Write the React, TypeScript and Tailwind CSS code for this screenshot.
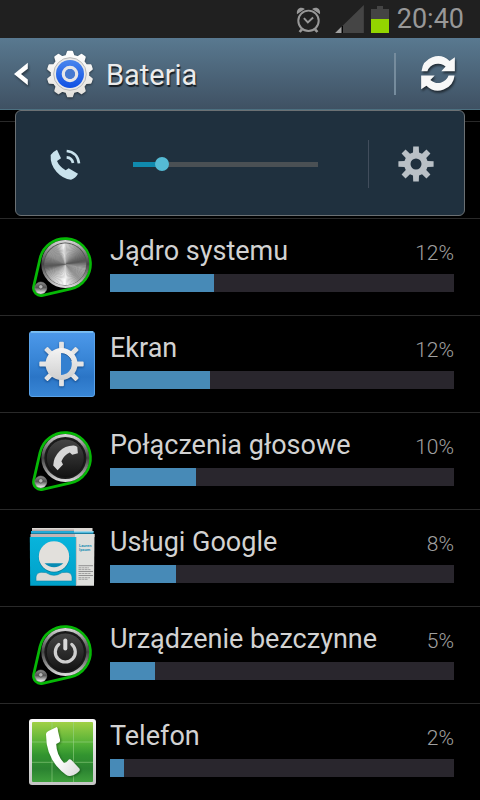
import React, { useId, useState } from "react";

function AlarmIcon() {
  return (
    <svg viewBox="46 18 76 80" className="h-[27px] w-[25px]" fill="none" stroke="#989898" strokeWidth="6" aria-hidden="true">
      <circle cx="84" cy="62" r="31" />
      <path d="M70 54L82 67L98 52" strokeWidth="6" />
      <path d="M64 88L57 96M104 88L111 96" strokeWidth="8" />
      <path d="M49 42C46 25 60 17 73 26ZM119 42C122 25 108 17 95 26Z" fill="#989898" stroke="none" />
    </svg>
  );
}

function SignalIcon() {
  return (
    <svg viewBox="167 14 85 83" className="h-7 w-[29px]" aria-hidden="true">
      <path d="M167 97L252 14V97Z" fill="#454545" />
      <path d="M167 97L187 77V97Z" fill="#a2a2a2" />
      <path d="M186 76H190V97H186Z" fill="#000" />
    </svg>
  );
}

function BatteryIcon() {
  return (
    <svg viewBox="0 0 18 27" className="h-[27px] w-[18px]" aria-hidden="true">
      <path d="M0 3H6V0H12V3H18V13H0Z" fill="#444" />
      <path d="M0 13H18V27H0Z" fill="#93d500" />
    </svg>
  );
}

function gearPath(cx: number, cy: number, teeth: number, root: number, tip: number, baseHalf: number, tipHalf: number) {
  const parts: string[] = [];
  for (let i = 0; i < teeth; i++) {
    const a = (i / teeth) * Math.PI * 2;
    const corners = [
      [-baseHalf, root],
      [-tipHalf, tip],
      [tipHalf, tip],
      [baseHalf, root],
    ];
    corners.forEach(([t, r], k) => {
      const x = cx + Math.sin(a) * r + Math.cos(a) * t;
      const y = cy - Math.cos(a) * r + Math.sin(a) * t;
      parts.push(`${i === 0 && k === 0 ? "M" : "L"}${x.toFixed(2)} ${y.toFixed(2)}`);
    });
  }
  return parts.join("") + "Z";
}

function SettingsIcon() {
  return (
    <svg viewBox="0 0 48 48" className="size-12 drop-shadow-[0_1px_1px_rgba(0,0,0,0.5)]" aria-hidden="true">
      <defs>
        <linearGradient id="set-blue" x2="0" y2="1">
          <stop offset="0" stopColor="#4a86ee" />
          <stop offset="1" stopColor="#0f50e4" />
        </linearGradient>
        <linearGradient id="set-white" x2="0" y2="1">
          <stop offset="0" stopColor="#fff" />
          <stop offset="1" stopColor="#e2e0dc" />
        </linearGradient>
      </defs>
      <path d={gearPath(24, 24, 10, 18, 22.3, 3.6, 2)} fill="url(#set-white)" stroke="url(#set-white)" strokeWidth="2" strokeLinejoin="round" />
      <circle cx="24" cy="24" r="16.3" fill="#e9e9e9" stroke="#b9b9b9" strokeWidth="1" />
      <circle cx="24" cy="24" r="14" fill="url(#set-blue)" />
      <circle cx="24" cy="24" r="6.6" fill="none" stroke="#e6e6e8" strokeWidth="3.4" />
      <circle cx="24" cy="24" r="5" fill="#477ad0" />
    </svg>
  );
}

function RefreshIcon() {
  const d = "M424 217A50 50 0 0 1 509 186L525 175V217H484L497 203A34 34 0 0 0 442 217Z";
  return (
    <svg viewBox="420 168 108 112" className="h-[37px] w-9 drop-shadow-[1px_2px_1px_rgba(0,0,0,0.55)]" fill="#f8f8f8" aria-hidden="true">
      <path d={d} />
      <path d={d} transform="rotate(180 474 223.5)" />
    </svg>
  );
}

function RingerIcon() {
  return (
    <svg viewBox="148 144 93 93" className="size-[31px]" fill="#c9e2ec" aria-hidden="true">
      <path d="M150 162Q158 151 169 146L181 172L169 180Q176 197 195 208L204 202L232 218Q225 231 211 236Q187 234 168 213Q148 191 150 162Z" />
      <path d="M198 150Q230 153 235 187M198 169Q214 170 217 186" fill="none" stroke="#c9e2ec" strokeWidth="8" />
    </svg>
  );
}

function GearIcon() {
  return (
    <svg viewBox="0 0 36 36" className="size-9" aria-hidden="true">
      <path
        fillRule="evenodd"
        d={gearPath(18, 18, 8, 11.5, 17.6, 3, 2.8) + "M12.5 18a5.5 5.5 0 1 0 11 0a5.5 5.5 0 1 0 -11 0Z"}
        fill="#b9c0c6"
      />
    </svg>
  );
}

const shine: [number, number][] = [
  [0, 205],
  [35, 150],
  [78, 85],
  [100, 165],
  [135, 150],
  [180, 250],
  [215, 200],
  [245, 150],
  [262, 85],
  [300, 150],
  [330, 160],
  [352, 240],
  [360, 225],
];

function shade(angle: number) {
  const i = Math.max(1, shine.findIndex(([a]) => a >= angle));
  const [a0, v0] = shine[i - 1];
  const [a1, v1] = shine[i];
  const v = Math.round(v0 + ((v1 - v0) * (angle - a0)) / (a1 - a0));
  return `rgb(${v},${v},${v})`;
}

function BrushedDisc({ cx, cy, r }: { cx: number; cy: number; r: number }) {
  const step = 4;
  return (
    <g>
      {Array.from({ length: 360 / step }, (_, i) => {
        const a = (i * step * Math.PI) / 180;
        const b = ((i * step + step + 1) * Math.PI) / 180;
        return (
          <path
            key={i}
            d={`M${cx} ${cy}L${cx + r * Math.sin(a)} ${cy - r * Math.cos(a)}L${cx + r * Math.sin(b)} ${cy - r * Math.cos(b)}Z`}
            fill={shade(i * step)}
          />
        );
      })}
    </g>
  );
}

function Knob({ children, metal }: { children?: React.ReactNode; metal?: boolean }) {
  const id = useId();
  return (
    <svg viewBox="0 0 68 68" className="size-[68px]" aria-hidden="true">
      <defs>
        <linearGradient id={id + "rim"} x2="0" y2="1">
          <stop offset="0" stopColor="#dcdcdc" />
          <stop offset="0.3" stopColor="#777" />
          <stop offset="0.5" stopColor="#444" />
          <stop offset="0.75" stopColor="#8c8c8c" />
          <stop offset="1" stopColor="#e0e0e0" />
        </linearGradient>
        <linearGradient id={id + "face"} x2="0" y2="1">
          <stop offset="0" stopColor="#454545" />
          <stop offset="1" stopColor="#131313" />
        </linearGradient>
        <linearGradient id={id + "dot"} x2="0" y2="1">
          <stop offset="0" stopColor="#8a8a8a" />
          <stop offset="0.45" stopColor="#555" />
          <stop offset="1" stopColor="#fff" />
        </linearGradient>
      </defs>
      <path
        d="M12.1 24.3A25.5 25.5 0 1 1 42.7 54.9L14.7 61.3A7.5 7.5 0 0 1 5.7 52.3Z"
        fill="#000"
        stroke="#06b806"
        strokeWidth="2.8"
      />
      <circle cx="37.3" cy="30" r="24" fill={`url(#${id}rim)`} />
      {metal ? (
        <>
          <circle cx="37.3" cy="30" r="21.5" fill="#555" />
          <BrushedDisc cx={37.3} cy={30.3} r={20.8} />
        </>
      ) : (
        <>
          <circle cx="37.3" cy="30" r="21" fill="#1b1b1b" />
          <circle cx="37.3" cy="30" r="19" fill={`url(#${id}face)`} stroke="#111" strokeWidth="0.8" />
        </>
      )}
      <circle cx="12.8" cy="54" r="6" fill={`url(#${id}dot)`} stroke="#888" strokeWidth="0.5" />
      <circle cx="12.8" cy="52.8" r="2.2" fill="#b5b5b5" stroke="#444" strokeWidth="0.7" />
      {children}
    </svg>
  );
}

function SystemIcon() {
  return <Knob metal />;
}

function VoiceIcon() {
  return (
    <Knob>
      <path
        d="M25.2 37.4Q25.6 29 31.5 23.2Q37 17.6 45.2 17.4Q48 17.2 49.3 19L49.9 25.2L44.2 26.8L41.8 24.4Q36 26.8 33.4 33.2L35 36.6L29.6 42.2Z"
        fill="#d6d6d6"
      />
    </Knob>
  );
}

function IdleIcon() {
  return (
    <Knob>
      <path d="M30.8 22.4A10 10 0 1 0 43.8 22.4" fill="none" stroke="#cfcfcf" strokeWidth="3.2" strokeLinecap="round" />
      <path d="M37.3 18.5V26.5" stroke="#d8d8d8" strokeWidth="4" strokeLinecap="round" />
    </Knob>
  );
}

function ScreenIcon() {
  return (
    <svg viewBox="0 0 68 68" className="size-[68px]" aria-hidden="true">
      <defs>
        <linearGradient id="scr-bg" x2="0" y2="1">
          <stop offset="0" stopColor="#4d99ea" />
          <stop offset="0.5" stopColor="#3582d3" />
          <stop offset="0.7" stopColor="#2b75c6" />
          <stop offset="1" stopColor="#3987d6" />
        </linearGradient>
        <linearGradient id="scr-fg" x2="0" y2="1">
          <stop offset="0" stopColor="#f4f4f4" />
          <stop offset="1" stopColor="#cfcfcf" />
        </linearGradient>
      </defs>
      <rect x="1.5" y="0.5" width="65" height="65" rx="2.5" fill="url(#scr-bg)" stroke="#5aa2e8" />
      <path d="M3 1H65" stroke="#83c6f4" strokeWidth="1.6" />
      <g className="drop-shadow-[0_1px_1px_rgba(0,40,90,0.6)]" fill="#e4e4e4" stroke="#e4e4e4">
        <path d={gearPath(33.5, 33, 8, 14, 21.3, 1.5, 1.5)} strokeWidth="1.8" strokeLinejoin="round" />
        <circle cx="33.5" cy="33" r="16" fill="url(#scr-fg)" stroke="none" />
      </g>
      <path d="M33 22.3A10.8 10.8 0 0 1 33 43.9Z" fill="#3480d0" />
      <path d="M33.3 22.6A10.5 10.5 0 0 1 43.4 30" fill="none" stroke="#1e5796" strokeWidth="0.8" />
    </svg>
  );
}

function ContactsIcon() {
  return (
    <svg viewBox="0 0 68 68" className="size-[68px]" aria-hidden="true">
      <defs>
        <linearGradient id="con-bg" x2="0" y2="1">
          <stop offset="0" stopColor="#08b4dc" />
          <stop offset="1" stopColor="#00a0c8" />
        </linearGradient>
      </defs>
      <path d="M4 3H64.5V6H4Z" fill="#dcd8d4" />
      <path d="M4 4.5H46V6H4Z" fill="#b5a8a8" />
      <path d="M3 6H65.5V8.8H3Z" fill="#25a9d6" />
      <path d="M46 6H65.5V7.4H46Z" fill="#9bd4e8" />
      <path d="M2.5 9H66.5V12H2.5Z" fill="#c3b4b4" />
      <path d="M47 9H66.5L66 60.7H48Z" fill="#dedfdc" />
      <path d="M1.8 12H48V60.7H2.2Z" fill="url(#con-bg)" />
      <path d="M48.3 12V60.7" stroke="#aaa" strokeWidth="0.7" />
      <circle cx="26" cy="32.2" r="15.4" fill="#067d9c" />
      <circle cx="26" cy="31.5" r="15.2" fill="#e2e0dc" />
      <path d="M16.5 38.3H35.3Q31 42.3 26 42.3Q21 42.3 16.5 38.3Z" fill="#078bb3" />
      <path d="M8 56V52Q8.5 47.6 13 47.3L18 47.6Q26 53 34 47.6L39 47.3Q43.5 47.6 44 52V56Z" fill="#dcdad6" stroke="#0787a8" strokeWidth="0.6" />
      <text x="51" y="21.5" fill="#238fb5" className="font-['Roboto',sans-serif] text-[4px] font-bold">
        Lauren
      </text>
      <text x="51" y="26" fill="#238fb5" className="font-['Roboto',sans-serif] text-[4px] font-bold">
        Ipsum
      </text>
      <path d="M50.5 40.7H65M50.5 46.5H65M50.5 50.5H65" stroke="#888" strokeWidth="0.9" />
      <path d="M50.5 42.8H61M50.5 44.6H63M50.5 48.5H63M50.5 52.7H62M50.5 54.3H60" stroke="#999" strokeWidth="0.9" strokeDasharray="3 0.6 2 0.5" />
    </svg>
  );
}

function PhoneIcon() {
  return (
    <svg viewBox="0 0 68 68" className="size-[68px]" aria-hidden="true">
      <defs>
        <linearGradient id="tel-bg" x2="0" y2="1">
          <stop offset="0" stopColor="#a0d045" />
          <stop offset="0.38" stopColor="#4fae36" />
          <stop offset="0.55" stopColor="#32942f" />
          <stop offset="0.78" stopColor="#2a8230" />
          <stop offset="1" stopColor="#3f9f3c" />
        </linearGradient>
        <linearGradient id="tel-rim" x2="0" y2="1">
          <stop offset="0" stopColor="#fafafa" />
          <stop offset="1" stopColor="#c4c4c4" />
        </linearGradient>
        <linearGradient id="tel-fg" x2="1" y2="1">
          <stop offset="0.5" stopColor="#fff" />
          <stop offset="1" stopColor="#d9d9d9" />
        </linearGradient>
      </defs>
      <rect x="1" y="0" width="67" height="66" rx="3" fill="url(#tel-rim)" />
      <rect x="4" y="3" width="61" height="60" rx="1" fill="url(#tel-bg)" />
      <path d="M24 3V63M45.5 3V63M4 23H65M4 43.3H65" stroke="#9ad68a" strokeOpacity="0.55" strokeWidth="1" />
      <path
        className="drop-shadow-[1px_1px_1px_rgba(0,50,0,0.5)]"
        d="M18 15Q18.3 12.8 20.5 12L28.8 8Q30 9.2 30 12L32 20.5Q32.5 23 30.5 23.8L28.2 25Q28.5 36 36 44Q38.5 43.4 40 41.4Q41.6 39.4 43.4 41L51.4 49.4Q52.4 51 50.8 52.6Q47 56.4 42 57Q40 57.2 37.6 55.4Q17.8 41 18 15Z"
        fill="url(#tel-fg)"
      />
    </svg>
  );
}

const usage = [
  { name: "Jądro systemu", percent: 12, fill: 104, Icon: SystemIcon },
  { name: "Ekran", percent: 12, fill: 100, Icon: ScreenIcon },
  { name: "Połączenia głosowe", percent: 10, fill: 86, Icon: VoiceIcon },
  { name: "Usługi Google", percent: 8, fill: 66, Icon: ContactsIcon },
  { name: "Urządzenie bezczynne", percent: 5, fill: 45, Icon: IdleIcon },
  { name: "Telefon", percent: 2, fill: 14, Icon: PhoneIcon },
];

const barScale = 344;

function VolumePanel() {
  const [volume, setVolume] = useState(13);
  const track = { background: `linear-gradient(to right, #108aae ${volume + 2}%, #4a5054 ${volume + 2}%)` };
  return (
    <section
      aria-label="Głośność"
      className="absolute inset-x-[15px] top-0 flex h-[106px] items-center rounded-md border border-[#6b7073] bg-[#1f303e] pt-0.5 pr-[30px] pl-[34px]"
    >
      <RingerIcon />
      <input
        type="range"
        aria-label="Głośność dzwonka"
        min={0}
        max={100}
        value={volume}
        onChange={(e) => setVolume(Number(e.target.value))}
        style={track}
        className="mr-[50px] ml-[52px] h-[5px] min-w-0 flex-1 appearance-none [&::-webkit-slider-thumb]:size-[14px] [&::-webkit-slider-thumb]:appearance-none [&::-webkit-slider-thumb]:rounded-full [&::-webkit-slider-thumb]:bg-[#55bbd5]"
      />
      <div className="mr-[29px] h-12 w-px bg-[#414d5c]" />
      <button type="button" aria-label="Ustawienia dźwięku">
        <GearIcon />
      </button>
    </section>
  );
}

export default function App() {
  return (
    <div className="min-h-screen bg-black font-['Roboto',sans-serif]">
      <div className="flex h-[38px] items-center justify-end bg-[#202020] pr-4">
        <AlarmIcon />
        <div className="ml-[14px]">
          <SignalIcon />
        </div>
        <div className="mr-2 ml-[7px]">
          <BatteryIcon />
        </div>
        <time className="text-[27px] leading-[38px] text-[#989898]">20:40</time>
      </div>

      <header className="flex h-[72px] items-center border-b border-[#4d7080] bg-linear-to-b from-[#597990] to-[#3f5163] pr-6 pl-[13px]">
        <button type="button" aria-label="Wstecz" className="flex items-center">
          <svg viewBox="0 0 16 24" className="h-6 w-4 drop-shadow-[1px_2px_1px_rgba(0,0,0,0.4)]" aria-hidden="true">
            <path d="M14.8 0.8V6.8L8 12L14.8 17.4V23.2L1 12Z" fill="#fff" />
          </svg>
          <span className="ml-[17px]">
            <SettingsIcon />
          </span>
        </button>
        <h1 className="ml-3 flex-1 pt-0.5 text-[29px] leading-9 text-[#ebebeb] [text-shadow:1px_2px_1px_rgba(0,0,0,0.7)]">Bateria</h1>
        <div className="mr-6 h-[42px] w-0.5 bg-[#768c9d]" />
        <button type="button" aria-label="Odśwież">
          <RefreshIcon />
        </button>
      </header>

      <main className="relative pt-[11px]">
        <ul>
          <li className="h-[97px] border-t border-[#292929]" aria-hidden="true" />
          {usage.map(({ name, percent, fill, Icon }) => (
            <li key={name} className="flex h-[97px] border-t border-[#292929] pt-[15px] pr-[26px] pl-7">
              <Icon />
              <div className="ml-[14px] min-w-0 flex-1">
                <div className="flex h-10 items-baseline justify-between">
                  <span className="text-[27px] leading-[34px] text-[#d2d2d2]">{name}</span>
                  <span className="text-[21px] leading-[34px] font-light text-[#a0a0a0]">{percent}%</span>
                </div>
                <div className="h-[18px] bg-[#29262d]">
                  <div className="h-full bg-[#478ab7]" style={{ width: `${(fill / barScale) * 100}%` }} />
                </div>
              </div>
            </li>
          ))}
        </ul>
        <VolumePanel />
      </main>
    </div>
  );
}
